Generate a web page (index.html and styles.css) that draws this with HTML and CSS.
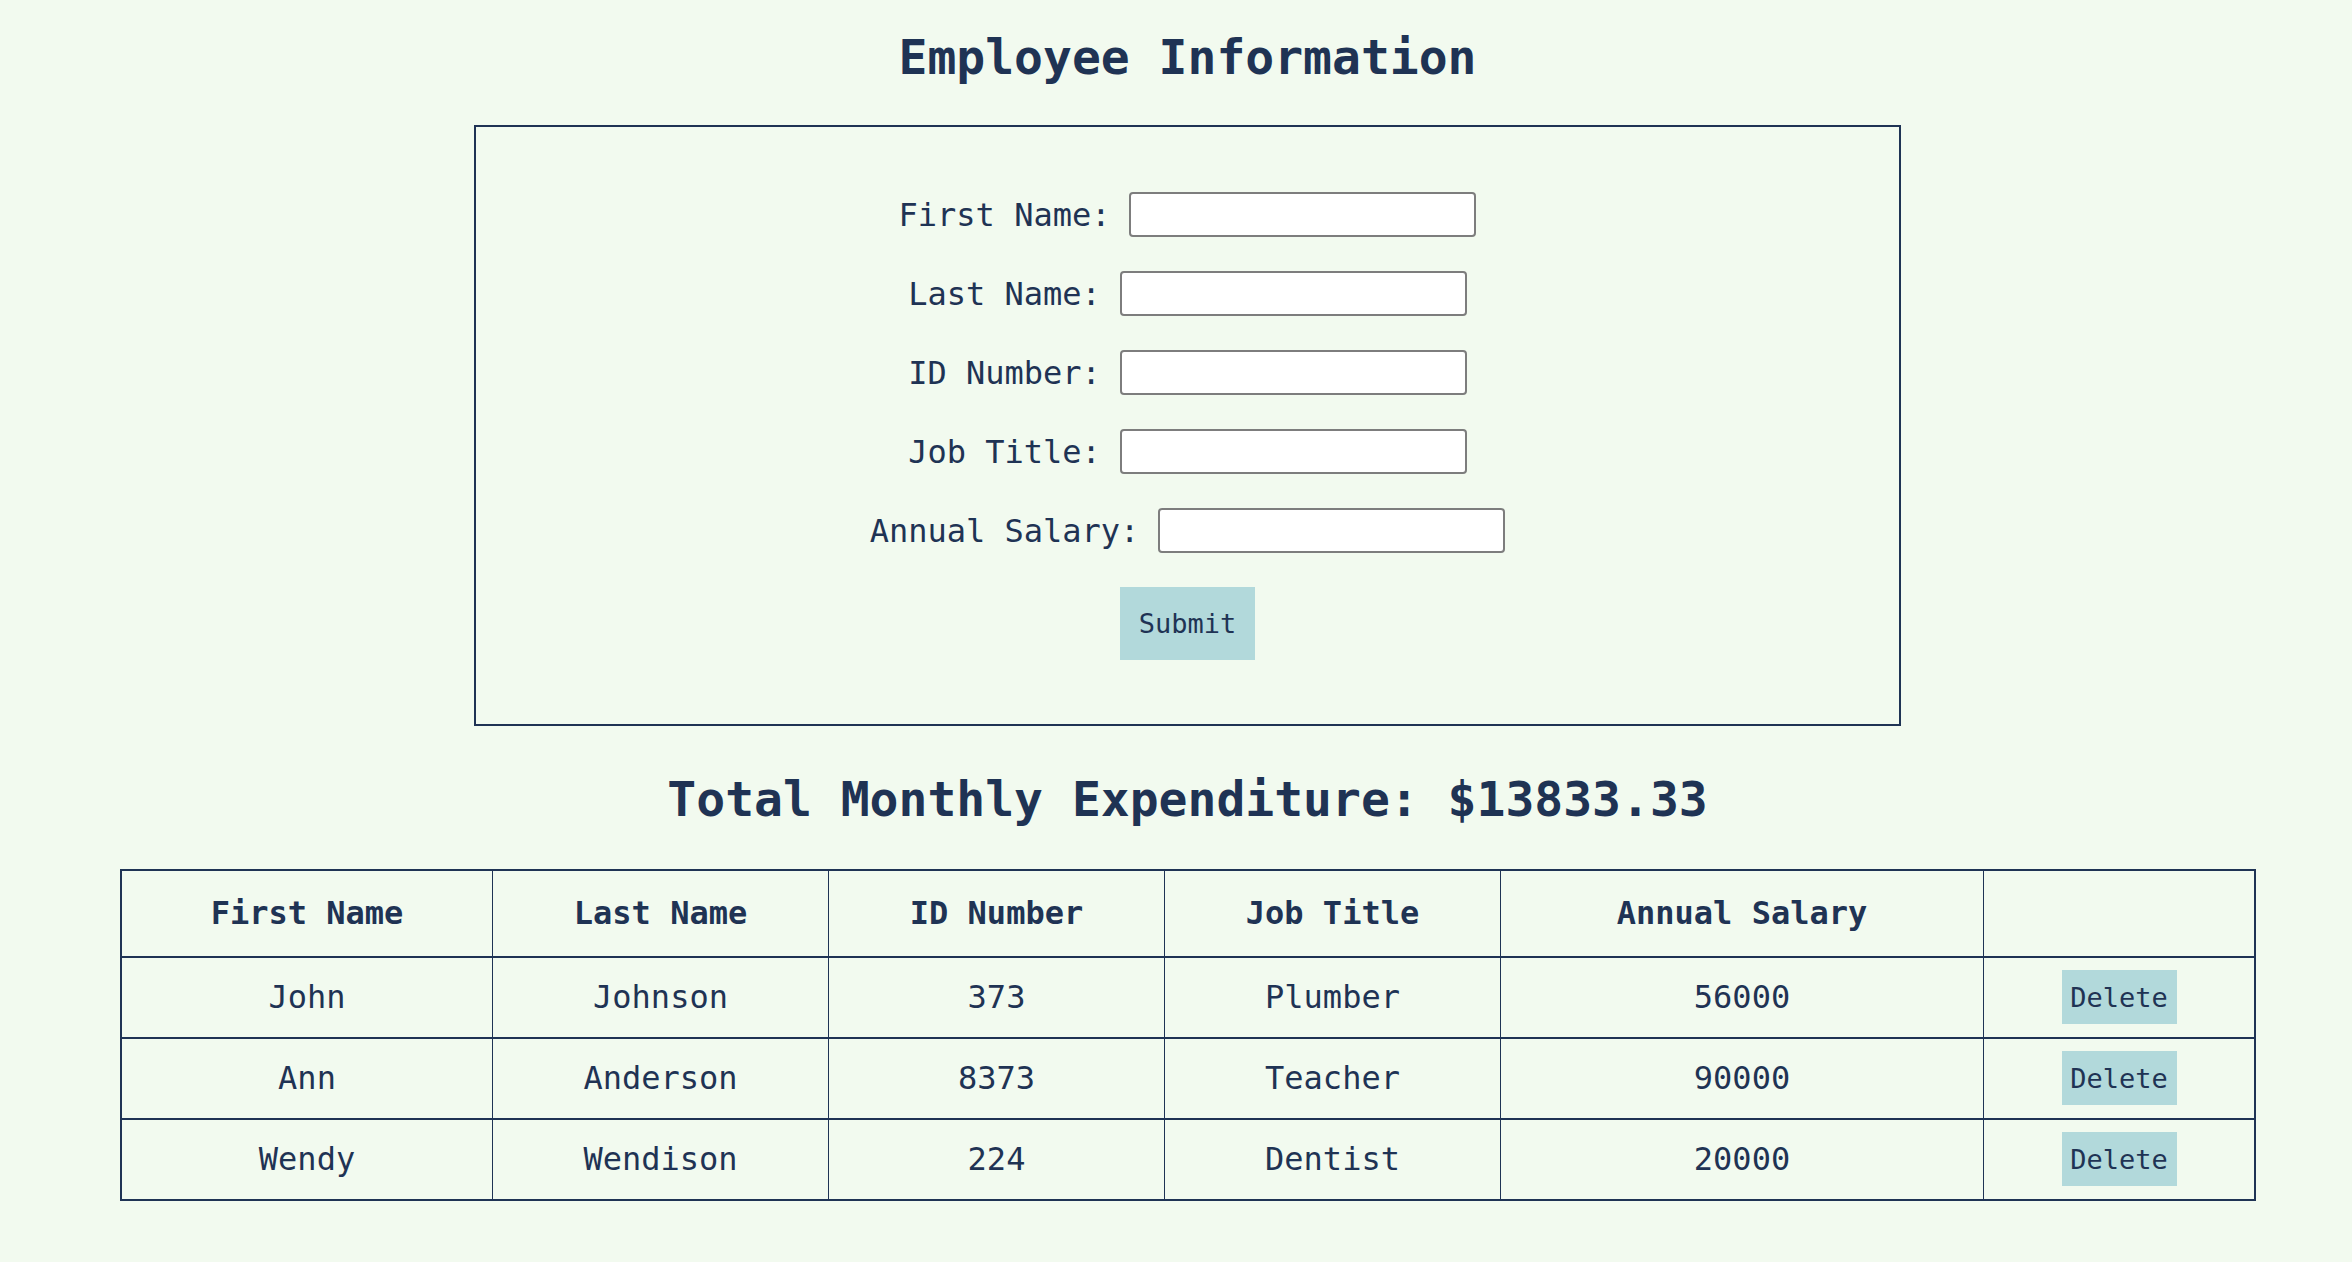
FILE: index.html
```html
<!DOCTYPE html>
<html lang="en">
<head>
<meta charset="utf-8">
<title>Employee Information</title>
<link rel="stylesheet" href="styles.css">
</head>
<body>
<div class="page">
  <h1 class="title">Employee Information</h1>
  <form class="emp-form">
    <div class="row"><label class="lbl" for="fn">First Name:</label><input class="inp" id="fn" type="text"></div>
    <div class="row"><label class="lbl" for="ln">Last Name:</label><input class="inp" id="ln" type="text"></div>
    <div class="row"><label class="lbl" for="idn">ID Number:</label><input class="inp" id="idn" type="text"></div>
    <div class="row"><label class="lbl" for="jt">Job Title:</label><input class="inp" id="jt" type="text"></div>
    <div class="row"><label class="lbl" for="as">Annual Salary:</label><input class="inp" id="as" type="text"></div>
    <div class="submit-row"><button type="button" class="btn submit">Submit</button></div>
  </form>
  <h2 class="total">Total Monthly Expenditure: $13833.33</h2>
  <table class="emp-table">
    <thead>
      <tr>
        <th class="c1">First Name</th>
        <th class="c2">Last Name</th>
        <th class="c3">ID Number</th>
        <th class="c4">Job Title</th>
        <th class="c5">Annual Salary</th>
        <th class="c6"></th>
      </tr>
    </thead>
    <tbody>
      <tr>
        <td>John</td><td>Johnson</td><td>373</td><td>Plumber</td><td>56000</td>
        <td><button type="button" class="btn del">Delete</button></td>
      </tr>
      <tr>
        <td>Ann</td><td>Anderson</td><td>8373</td><td>Teacher</td><td>90000</td>
        <td><button type="button" class="btn del">Delete</button></td>
      </tr>
      <tr>
        <td>Wendy</td><td>Wendison</td><td>224</td><td>Dentist</td><td>20000</td>
        <td><button type="button" class="btn del">Delete</button></td>
      </tr>
    </tbody>
  </table>
</div>
</body>
</html>
```
FILE: styles.css
```css
html, body {
  margin: 0;
  padding: 0;
  background: #f2faef;
}
body {
  font-family: "DejaVu Sans Mono", "Liberation Mono", monospace;
  color: #1f3354;
}
.page {
  padding: 28.5px 97px 40px 120px;
}
.title {
  margin: 0;
  font-size: 48px;
  line-height: 1.2;
  font-weight: bold;
  text-align: center;
}
.emp-form {
  box-sizing: border-box;
  width: 1427px;
  margin: 39px auto 0;
  border: 2px solid #1f3354;
  padding: 65px 0 64px;
  display: flex;
  flex-direction: column;
  gap: 34px;
}
.row {
  display: flex;
  justify-content: center;
  align-items: center;
  gap: 19px;
  height: 45px;
}
.lbl {
  font-size: 32px;
  line-height: 1;
  white-space: pre;
}
.inp {
  box-sizing: border-box;
  width: 347px;
  height: 45px;
  margin: 0;
  border: 2px solid #7d7d7d;
  border-radius: 4px;
  background: #fff;
  padding: 0 6px;
  font-family: inherit;
}
.submit-row {
  display: flex;
  justify-content: center;
}
.btn {
  font-family: "DejaVu Sans Mono", "Liberation Mono", monospace;
  font-size: 27px;
  color: #1f3354;
  background: #b2d9db;
  border: none;
  margin: 0;
  cursor: pointer;
}
.submit {
  width: 135px;
  height: 73px;
  padding: 0;
}
.total {
  margin: 45px 0 0;
  font-size: 48px;
  line-height: 1.2;
  font-weight: bold;
  text-align: center;
}
.emp-table {
  margin-top: 40px;
  width: 2127px;
  table-layout: fixed;
  border-collapse: collapse;
  border: 2px solid #1f3354;
}
.emp-table th,
.emp-table td {
  border-top: 2px solid #1f3354;
  border-bottom: 2px solid #1f3354;
  border-left: 1.5px solid #1f3354;
  border-right: 1.5px solid #1f3354;
  text-align: center;
  vertical-align: middle;
  padding: 0;
  font-size: 32px;
}
.emp-table th {
  height: 85px;
  font-weight: bold;
}
.emp-table td {
  height: 79px;
}
.c1 { width: 370px; }
.c2 { width: 335px; }
.c3 { width: 335px; }
.c4 { width: 335px; }
.c5 { width: 482px; }
.c6 { width: 270px; }
.del {
  width: 115px;
  height: 54px;
  padding: 0;
  vertical-align: middle;
}
```
